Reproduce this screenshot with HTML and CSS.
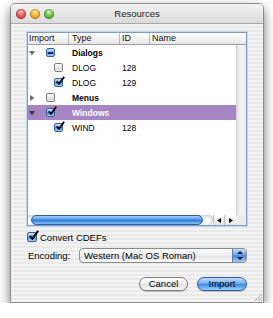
FILE: index.html
```html
<!DOCTYPE html>
<html lang="en">
<head>
    <meta charset="UTF-8">
    <title>Resources</title>
    <link rel="stylesheet" href="styles.css">
</head>
<body>
    <div class="window">
        <div class="titlebar">
            <div class="lights">
                <span class="light red"></span>
                <span class="light yellow"></span>
                <span class="light green"></span>
            </div>
            <div class="title">Resources</div>
            <div></div>
        </div>

        <div class="content">
            <div class="table">
                <div class="thead">
                    <div class="th c-import">Import</div>
                    <div class="th c-type">Type</div>
                    <div class="th c-id">ID</div>
                    <div class="th c-name">Name</div>
                </div>
                <div class="tbody">
                    <div class="rows">
                        <div class="row">
                            <div class="c-import">
                                <svg class="tri" width="6" height="6" viewBox="0 0 6 6"><polygon points="0,1 6,1 3,5.5"/></svg>
                                <span class="cb parent mixed"></span>
                            </div>
                            <div class="c-type bold">Dialogs</div>
                        </div>
                        <div class="row">
                            <div class="c-import"><span class="cb child"></span></div>
                            <div class="c-type">DLOG</div>
                            <div class="c-id">128</div>
                        </div>
                        <div class="row">
                            <div class="c-import">
                                <span class="cb child on"><svg viewBox="0 0 12 12"><path d="M2 6.5 L4.8 9.5 L11 1"/></svg></span>
                            </div>
                            <div class="c-type">DLOG</div>
                            <div class="c-id">129</div>
                        </div>
                        <div class="row">
                            <div class="c-import">
                                <svg class="tri" width="6" height="6" viewBox="0 0 6 6"><polygon points="1,0 5.5,3 1,6"/></svg>
                                <span class="cb parent"></span>
                            </div>
                            <div class="c-type bold">Menus</div>
                        </div>
                        <div class="row selected">
                            <div class="c-import">
                                <svg class="tri" width="6" height="6" viewBox="0 0 6 6"><polygon points="0,1 6,1 3,5.5"/></svg>
                                <span class="cb parent on"><svg viewBox="0 0 12 12"><path d="M2 6.5 L4.8 9.5 L11 1"/></svg></span>
                            </div>
                            <div class="c-type bold">Windows</div>
                        </div>
                        <div class="row">
                            <div class="c-import">
                                <span class="cb child on"><svg viewBox="0 0 12 12"><path d="M2 6.5 L4.8 9.5 L11 1"/></svg></span>
                            </div>
                            <div class="c-type">WIND</div>
                            <div class="c-id">128</div>
                        </div>
                    </div>
                    <div class="vtrack"></div>
                </div>
                <div class="hscroll">
                    <div class="htrack"><div class="thumb"></div></div>
                    <div class="arrow"><svg width="4" height="5" viewBox="0 0 4 5"><polygon points="4,0 4,5 0,2.5"/></svg></div>
                    <div class="arrow"><svg width="4" height="5" viewBox="0 0 4 5"><polygon points="0,0 4,2.5 0,5"/></svg></div>
                    <div class="corner"></div>
                </div>
            </div>

            <div class="check-row">
                <span class="cb big on"><svg viewBox="0 0 12 12"><path d="M2 6.5 L4.8 9.5 L11 1"/></svg></span>
                <span class="check-label">Convert CDEFs</span>
            </div>

            <div class="enc-row">
                <span class="enc-label">Encoding:</span>
                <div class="popup">
                    <span class="popup-text">Western (Mac OS Roman)</span>
                    <span class="popup-arrows">
                        <svg width="6" height="9" viewBox="0 0 6 9"><polygon points="3,0 6,3 0,3"/><polygon points="0,6 6,6 3,9"/></svg>
                    </span>
                </div>
            </div>

            <div class="buttons">
                <button class="btn cancel">Cancel</button>
                <button class="btn default">Import</button>
            </div>
        </div>

        <svg class="grip" width="8" height="8" viewBox="0 0 8 8">
            <path d="M8 1 L1 8 M8 4 L4 8 M8 7 L7 8"/>
        </svg>
    </div>
</body>
</html>
```

FILE: styles.css
```css
* {
    box-sizing: border-box;
}
body {
    margin: 0;
    background: #fff;
    font-family: "Liberation Sans", Arial, sans-serif;
    color: #000;
}
.window {
    position: relative;
    width: 254px;
    height: 300px;
    margin: 3px 0 0 10px;
    border: 1px solid #8e8e8e;
    border-radius: 5px 5px 0 0;
    background: repeating-linear-gradient(to bottom, #f3f3f3 0, #f3f3f3 2px, #e9e9e9 2px, #e9e9e9 4px);
    box-shadow: 0 5px 12px rgba(0, 0, 0, 0.55);
}
.titlebar {
    height: 20px;
    display: grid;
    grid-template-columns: 1fr auto 1fr;
    align-items: center;
    border-bottom: 1px solid #a8a8a8;
    border-radius: 4px 4px 0 0;
    background: linear-gradient(#f2f2f2, #dadada);
}
.lights {
    display: flex;
    gap: 4px;
    padding-left: 5px;
}
.light {
    width: 10px;
    height: 10px;
    border-radius: 50%;
    box-shadow: inset 0 0 0 0.5px rgba(0, 0, 0, 0.35);
}
.light.red {
    background: radial-gradient(circle at 50% 30%, #ffc3c3 0, #e85a56 45%, #b8221f 100%);
}
.light.yellow {
    background: radial-gradient(circle at 50% 30%, #ffeaa8 0, #f1b232 45%, #c57a0c 100%);
}
.light.green {
    background: radial-gradient(circle at 50% 30%, #d6f5b9 0, #6cc04a 45%, #2f8a22 100%);
}
.title {
    font-size: 9.5px;
    color: #222;
}
.content {
    padding: 8px 16px 0;
}

/* list */
.table {
    height: 194px;
    display: flex;
    flex-direction: column;
    background: #fff;
    border: 1px solid #7f9cc4;
    box-shadow: 0 0 0 1px #c2d6ef;
}
.thead {
    height: 12px;
    display: flex;
    border-bottom: 1px solid #9c9c9c;
    background: linear-gradient(#ffffff, #e6e6e6);
    font-size: 9px;
    line-height: 11px;
    color: #111;
}
.th {
    border-left: 1px solid #b8b8b8;
    padding-left: 2px;
}
.th.c-import {
    border-left: none;
    padding-left: 1px;
}
.th.c-type {
    padding-left: 3px;
}
.c-import {
    width: 40px;
    flex: none;
}
.c-type {
    width: 51px;
    flex: none;
}
.c-id {
    width: 30px;
    flex: none;
}
.c-name {
    flex: 1;
}
.tbody {
    flex: 1;
    display: flex;
}
.rows {
    flex: 1;
}
.vtrack {
    width: 10px;
    border-left: 1px solid #d2d2d2;
    background: linear-gradient(to right, #e3e3e3, #f5f5f5 50%, #ececec);
}
.row {
    height: 15px;
    display: flex;
    align-items: center;
    font-size: 8.5px;
}
.row .c-import {
    display: flex;
    align-items: center;
    padding-left: 1px;
}
.row .c-type {
    padding-left: 4px;
}
.row .c-id {
    padding-left: 3px;
}
.bold {
    font-weight: bold;
}
.row.selected {
    background: #a585c2;
    color: #fff;
}
.tri {
    fill: #6e6e6e;
}
.row.selected .tri {
    fill: #3a3a3a;
}

/* checkboxes */
.cb {
    position: relative;
    display: inline-block;
    width: 9px;
    height: 9px;
    border: 1px solid #7d7d7d;
    border-radius: 2px;
    background: linear-gradient(#ffffff, #e8e8e8 50%, #d4d4d4 51%, #f2f2f2);
}
.cb.parent {
    margin-left: 11px;
}
.cb.child {
    margin-left: 25px;
}
.cb.on,
.cb.mixed {
    border-color: #38609f;
    background: linear-gradient(#c9e2fb, #7fb3ec 45%, #4a8ce0 50%, #9fd0fb);
}
.cb.mixed::after {
    content: "";
    position: absolute;
    left: 1px;
    right: 1px;
    top: 3px;
    height: 2px;
    background: #1d2d52;
}
.cb svg {
    position: absolute;
    left: 0;
    top: -3px;
    width: 10px;
    height: 10px;
    fill: none;
    stroke: #000;
    stroke-width: 2.2;
}
.cb.big {
    width: 10px;
    height: 10px;
}
.cb.big svg {
    width: 11px;
    height: 11px;
}

/* horizontal scroller */
.hscroll {
    height: 10px;
    display: flex;
}
.htrack {
    width: 185px;
    display: flex;
    align-items: center;
    padding-left: 3px;
    border-radius: 0 5px 5px 0;
    background: linear-gradient(#d6d6d6, #ffffff 45%, #f2f2f2);
    box-shadow: inset -1px 0 0 #c4c4c4;
}
.thumb {
    width: 172px;
    height: 10px;
    border: 1px solid #2a5ea8;
    border-radius: 5px;
    background: linear-gradient(#a9d0f8, #5a9ce8 40%, #2f79d8 55%, #8cc6fa);
}
.arrow {
    width: 11px;
    display: flex;
    align-items: center;
    justify-content: center;
    border-left: 1px solid #c0c0c0;
    background: linear-gradient(#ffffff, #e4e4e4);
}
.arrow + .arrow {
    width: 12px;
}
.corner {
    width: 10px;
    background: #ececec;
}

/* bottom controls */
.check-row {
    height: 12px;
    margin-top: 5px;
    display: flex;
    align-items: center;
    font-size: 9.5px;
}
.check-label {
    margin-left: 3px;
}
.enc-row {
    height: 15px;
    margin-top: 5px;
    display: flex;
    align-items: center;
    font-size: 9.5px;
}
.enc-label {
    padding-left: 1px;
}
.popup {
    margin-left: auto;
    width: 168px;
    height: 15px;
    display: flex;
    align-items: center;
    border: 1px solid #8a8a8a;
    border-radius: 4px;
    overflow: hidden;
    background: linear-gradient(#ffffff, #f0f0f0 50%, #e2e2e2 51%, #fbfbfb);
}
.popup-text {
    flex: 1;
    padding-left: 4px;
}
.popup-arrows {
    width: 14px;
    height: 100%;
    display: flex;
    align-items: center;
    justify-content: center;
    border-left: 1px solid #5a7fb8;
    background: linear-gradient(#bfdcfa, #6fa8ea 45%, #3f86de 52%, #9ccffb);
}
.popup-arrows svg {
    fill: #1a1a1a;
}
.buttons {
    margin-top: 14px;
    display: flex;
    justify-content: flex-end;
    gap: 9px;
}
.btn {
    height: 14px;
    padding: 0;
    font-family: "Liberation Sans", Arial, sans-serif;
    font-size: 9.5px;
    line-height: 12px;
    color: #000;
    border-radius: 7px;
    border: 1px solid #7a7a7a;
    background: linear-gradient(#ffffff, #f0f0f0 50%, #dedede 51%, #fafafa);
    box-shadow: 0 1px 1px rgba(0, 0, 0, 0.2);
}
.btn.cancel {
    width: 49px;
}
.btn.default {
    width: 50px;
    border-color: #2d5aa0;
    background: linear-gradient(#c4e0fb, #74aeec 45%, #3f87e0 52%, #9ad0fc);
}
.grip {
    position: absolute;
    right: 1px;
    bottom: 1px;
    stroke: #9a9a9a;
    stroke-width: 0.8;
}
```
